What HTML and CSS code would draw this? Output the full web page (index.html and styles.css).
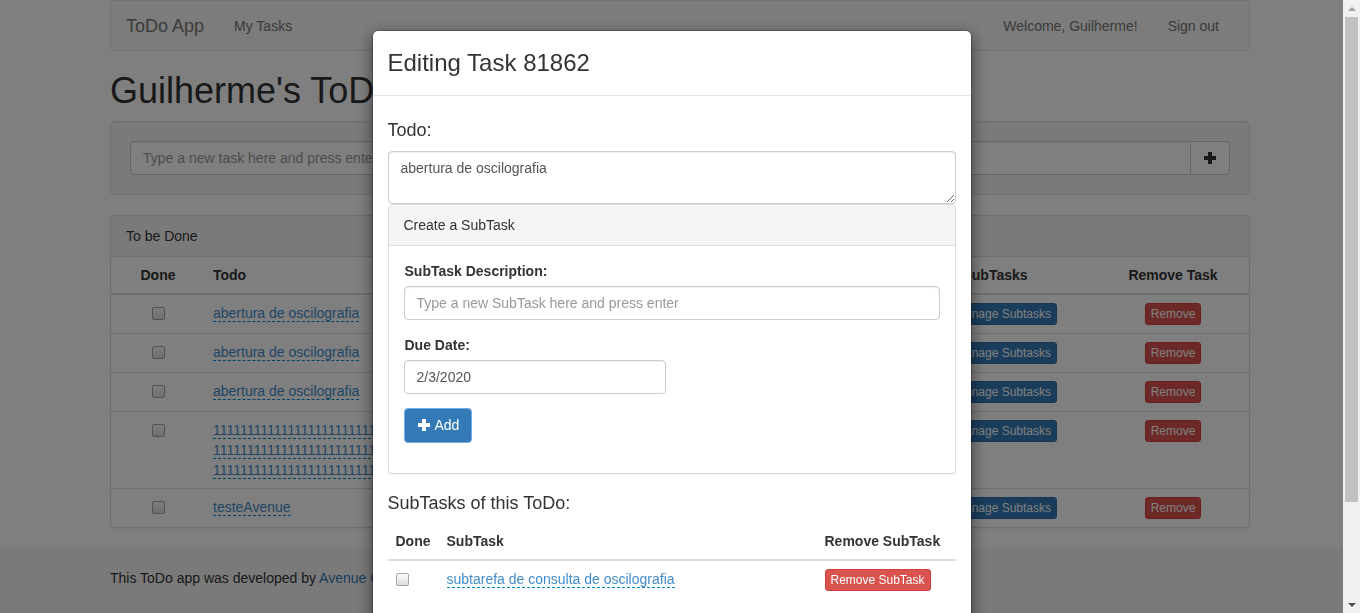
FILE: index.html
```html
<!DOCTYPE html>
<html lang="en">
<head>
<meta charset="utf-8">
<title>ToDo App</title>
<link rel="stylesheet" href="styles.css">
</head>
<body>
<div class="page">
  <div class="container">
    <nav class="navbar">
      <div class="nav-group">
        <a class="brand" href="#">ToDo App</a>
        <a class="nav-link" href="#">My Tasks</a>
      </div>
      <div class="nav-group">
        <span class="nav-text">Welcome, Guilherme!</span>
        <a class="nav-link" href="#">Sign out</a>
      </div>
    </nav>

    <h1 class="page-title">Guilherme's ToDo List</h1>

    <div class="well">
      <div class="input-group">
        <input class="form-control group-input" type="text" placeholder="Type a new task here and press enter">
        <button class="btn btn-default group-btn" type="button">
          <svg class="glyph" width="14" height="14" viewBox="0 0 14 14"><path d="M5 1h4v4h4v4H9v4H5V9H1V5h4z" fill="#333"/></svg>
        </button>
      </div>
    </div>

    <div class="panel">
      <div class="panel-heading">To be Done</div>
      <table class="table tasks">
        <colgroup>
          <col class="c-done"><col class="c-todo"><col class="c-due"><col class="c-sub"><col class="c-rem">
        </colgroup>
        <thead>
          <tr>
            <th class="center">Done</th>
            <th>Todo</th>
            <th>Due Date</th>
            <th class="center th-sub">SubTasks</th>
            <th class="center col-rem">Remove Task</th>
          </tr>
        </thead>
        <tbody>
          <tr>
            <td class="center"><input class="check" type="checkbox"></td>
            <td><a class="editable" href="#">abertura de oscilografia</a></td>
            <td>02/03/2020</td>
            <td class="center"><button class="btn btn-xs btn-primary">Manage Subtasks</button></td>
            <td class="center col-rem"><button class="btn btn-xs btn-danger">Remove</button></td>
          </tr>
          <tr>
            <td class="center"><input class="check" type="checkbox"></td>
            <td><a class="editable" href="#">abertura de oscilografia</a></td>
            <td>02/03/2020</td>
            <td class="center"><button class="btn btn-xs btn-primary">Manage Subtasks</button></td>
            <td class="center col-rem"><button class="btn btn-xs btn-danger">Remove</button></td>
          </tr>
          <tr>
            <td class="center"><input class="check" type="checkbox"></td>
            <td><a class="editable" href="#">abertura de oscilografia</a></td>
            <td>02/03/2020</td>
            <td class="center"><button class="btn btn-xs btn-primary">Manage Subtasks</button></td>
            <td class="center col-rem"><button class="btn btn-xs btn-danger">Remove</button></td>
          </tr>
          <tr>
            <td class="center"><input class="check" type="checkbox"></td>
            <td><a class="editable" href="#">11111111111111111111111111111111111111111111111111<br>11111111111111111111111111111111111111111111111111<br>11111111111111111111111111111111111111111111111111</a></td>
            <td>02/03/2020</td>
            <td class="center"><button class="btn btn-xs btn-primary">Manage Subtasks</button></td>
            <td class="center col-rem"><button class="btn btn-xs btn-danger">Remove</button></td>
          </tr>
          <tr>
            <td class="center"><input class="check" type="checkbox"></td>
            <td><a class="editable" href="#">testeAvenue</a></td>
            <td>02/03/2020</td>
            <td class="center"><button class="btn btn-xs btn-primary">Manage Subtasks</button></td>
            <td class="center col-rem"><button class="btn btn-xs btn-danger">Remove</button></td>
          </tr>
        </tbody>
      </table>
    </div>
  </div>

  <footer class="footer">
    <div class="container">
      <p class="footer-text">This ToDo app was developed by <a href="#">Avenue Code</a></p>
    </div>
  </footer>
</div>

<div class="backdrop"></div>

<div class="modal-layer">
  <div class="modal-scroll">
    <div class="modal-dialog">
      <div class="modal-content">
        <div class="modal-header">
          <h3 class="modal-title">Editing Task 81862</h3>
        </div>
        <div class="modal-body">
          <h4 class="section-title">Todo:</h4>
          <textarea class="form-control todo-text" rows="2">abertura de oscilografia</textarea>

          <div class="panel sub-panel">
            <div class="panel-heading">Create a SubTask</div>
            <div class="panel-body">
              <div class="form-group">
                <label class="label">SubTask Description:</label>
                <input class="form-control" type="text" placeholder="Type a new SubTask here and press enter">
              </div>
              <div class="form-group">
                <label class="label">Due Date:</label>
                <input class="form-control date-input" type="text" value="2/3/2020">
              </div>
              <div class="form-group add-group">
                <button class="btn btn-primary btn-add" type="button">
                  <svg class="glyph" width="14" height="14" viewBox="0 0 14 14"><path d="M5 1h4v4h4v4H9v4H5V9H1V5h4z" fill="#fff"/></svg>
                  Add
                </button>
              </div>
            </div>
          </div>

          <h4 class="section-title sub-title">SubTasks of this ToDo:</h4>
          <table class="table subtasks">
            <colgroup><col class="s-done"><col><col class="s-rem"></colgroup>
            <thead>
              <tr><th>Done</th><th>SubTask</th><th>Remove SubTask</th></tr>
            </thead>
            <tbody>
              <tr>
                <td><input class="check" type="checkbox"></td>
                <td><a class="editable" href="#">subtarefa de consulta de oscilografia</a></td>
                <td><button class="btn btn-xs btn-danger">Remove SubTask</button></td>
              </tr>
            </tbody>
          </table>
        </div>
        <div class="modal-footer">
          <button class="btn btn-default" type="button">Close</button>
        </div>
      </div>
    </div>
  </div>
  <div class="scrollbar">
    <div class="sb-btn"><span class="sb-up"></span></div>
    <div class="sb-thumb"></div>
    <div class="sb-track"></div>
    <div class="sb-btn"><span class="sb-down"></span></div>
  </div>
</div>
</body>
</html>
```

FILE: styles.css
```css
* { box-sizing: border-box; }

html, body {
  margin: 0;
  height: 100%;
}

body {
  font-family: "Liberation Sans", Arial, sans-serif;
  font-size: 14px;
  line-height: 20px;
  color: #333;
  background: #fff;
  overflow: hidden;
}

a { color: #337ab7; text-decoration: none; }

.container {
  width: 1140px;
  margin: 0 auto;
}

/* Navbar */
.navbar {
  display: flex;
  justify-content: space-between;
  height: 51px;
  background: #f8f8f8;
  border: 1px solid #e7e7e7;
  border-radius: 4px;
  margin-bottom: 20px;
  padding-right: 15px;
}

.nav-group { display: flex; align-items: flex-start; }

.brand {
  padding: 15px 15px 14px;
  font-size: 18px;
  line-height: 20px;
  color: #777;
}

.nav-link {
  padding: 15px 15px 14px;
  line-height: 20px;
  color: #777;
}

.nav-text {
  margin: 15px 15px 14px;
  color: #777;
}

/* Title */
.page-title {
  margin: 20px 0 10px;
  font-size: 36px;
  line-height: 1.1;
  font-weight: 500;
}

/* Well */
.well {
  padding: 19px;
  background: #f5f5f5;
  border: 1px solid #e3e3e3;
  border-radius: 4px;
  box-shadow: inset 0 1px 1px rgba(0,0,0,.05);
  margin-bottom: 20px;
}

.input-group { display: flex; }

.form-control {
  display: block;
  width: 100%;
  height: 34px;
  padding: 6px 12px;
  font-family: inherit;
  font-size: 14px;
  line-height: 20px;
  color: #555;
  background: #fff;
  border: 1px solid #ccc;
  border-radius: 4px;
  box-shadow: inset 0 1px 1px rgba(0,0,0,.075);
}

.form-control::placeholder { color: #999; }

.group-input {
  flex: 1;
  border-radius: 4px 0 0 4px;
}

.btn {
  display: inline-flex;
  align-items: center;
  padding: 6px 12px;
  font-family: inherit;
  font-size: 14px;
  line-height: 20px;
  border: 1px solid transparent;
  border-radius: 4px;
  cursor: pointer;
  white-space: nowrap;
}

.btn-default {
  color: #333;
  background: #fff;
  border-color: #ccc;
}

.group-btn {
  margin-left: -1px;
  border-radius: 0 4px 4px 0;
  height: 34px;
}

.glyph { display: block; }

.btn-primary {
  color: #fff;
  background: #337ab7;
  border-color: #2e6da4;
}

.btn-danger {
  color: #fff;
  background: #d9534f;
  border-color: #d43f3a;
}

.btn-xs {
  padding: 1px 5px;
  font-size: 12px;
  line-height: 18px;
  border-radius: 3px;
}

/* Panel */
.panel {
  background: #fff;
  border: 1px solid #ddd;
  border-radius: 4px;
  box-shadow: 0 1px 1px rgba(0,0,0,.05);
  margin-bottom: 20px;
}

.panel-heading {
  padding: 10px 15px;
  background: #f5f5f5;
  border-bottom: 1px solid #ddd;
  border-radius: 3px 3px 0 0;
}

.panel-body { padding: 15px; }

/* Tables */
.table {
  width: 100%;
  border-collapse: collapse;
  table-layout: fixed;
}

.table th, .table td {
  padding: 8px;
  line-height: 20px;
  text-align: left;
  vertical-align: top;
  border-top: 1px solid #ddd;
}

.table thead th {
  vertical-align: bottom;
  border-top: 0;
  border-bottom: 2px solid #ddd;
  font-weight: 700;
}

.table td .btn { vertical-align: top; }

.table .center { text-align: center; }

.c-done { width: 94px; }
.c-todo { width: 456px; }
.c-due { width: 262px; }
.c-sub { width: 160px; }
.c-rem { width: 166px; }

.tasks .col-rem { padding-left: 22px; }
.tasks .th-sub { padding-right: 24px; }

.editable {
  color: #428bca;
  border-bottom: 1px dashed #0088cc;
}

.check {
  appearance: none;
  -webkit-appearance: none;
  display: inline-block;
  vertical-align: top;
  width: 13px;
  height: 13px;
  margin: 4px 0 0;
  border: 1px solid #a5a5a5;
  border-radius: 2px;
  background: linear-gradient(#fbfbfb, #dedede);
}

/* Footer */
.footer {
  background: #f5f5f5;
  padding: 20px 0 30px;
}

.footer-text { margin: 0; }

/* Modal */
.backdrop {
  position: fixed;
  inset: 0;
  background: rgba(0,0,0,.5);
}

.modal-layer {
  position: fixed;
  inset: 0;
  display: flex;
}

.modal-scroll {
  flex: 1;
  overflow: hidden;
}

.modal-dialog {
  width: 600px;
  margin: 30px auto;
}

.modal-content {
  background: #fff;
  background-clip: padding-box;
  border: 1px solid rgba(0,0,0,.2);
  border-radius: 6px;
  box-shadow: 0 5px 15px rgba(0,0,0,.5);
}

.modal-header {
  padding: 15px;
  border-bottom: 1px solid #e5e5e5;
}

.modal-title {
  margin: 0;
  font-size: 24px;
  line-height: 34px;
  font-weight: 500;
}

.modal-body { padding: 15px; }

.section-title {
  margin: 10px 0;
  font-size: 18px;
  line-height: 1.1;
  font-weight: 500;
}

.sub-title {
  margin: 9px 0 9px;
}

.todo-text {
  height: 53px;
  resize: vertical;
}

.sub-panel { margin-bottom: 20px; }

.form-group { margin-bottom: 15px; }

.add-group { margin-top: -1px; }

.label {
  display: inline-block;
  margin: 0 0 5px 1px;
  font-weight: 700;
}

.date-input { width: 262px; }

.btn-add {
  gap: 4px;
  height: 35px;
  border-color: #74ace8;
}

.s-done { width: 51px; }
.s-rem { width: 139px; }

.modal-footer {
  padding: 15px;
  text-align: right;
  border-top: 1px solid #e5e5e5;
}

/* Scrollbar */
.scrollbar {
  width: 17px;
  background: #f1f1f1;
  display: flex;
  flex-direction: column;
}

.sb-btn {
  height: 17px;
  display: flex;
  align-items: center;
  justify-content: center;
}

.sb-up {
  width: 0;
  height: 0;
  border-left: 4px solid transparent;
  border-right: 4px solid transparent;
  border-bottom: 4px solid #a3a3a3;
}

.sb-down {
  width: 0;
  height: 0;
  border-left: 4px solid transparent;
  border-right: 4px solid transparent;
  border-top: 4px solid #505050;
}

.sb-thumb {
  height: 485px;
  margin: 0 2px;
  background: #c1c1c1;
}

.sb-track { flex: 1; }
```
